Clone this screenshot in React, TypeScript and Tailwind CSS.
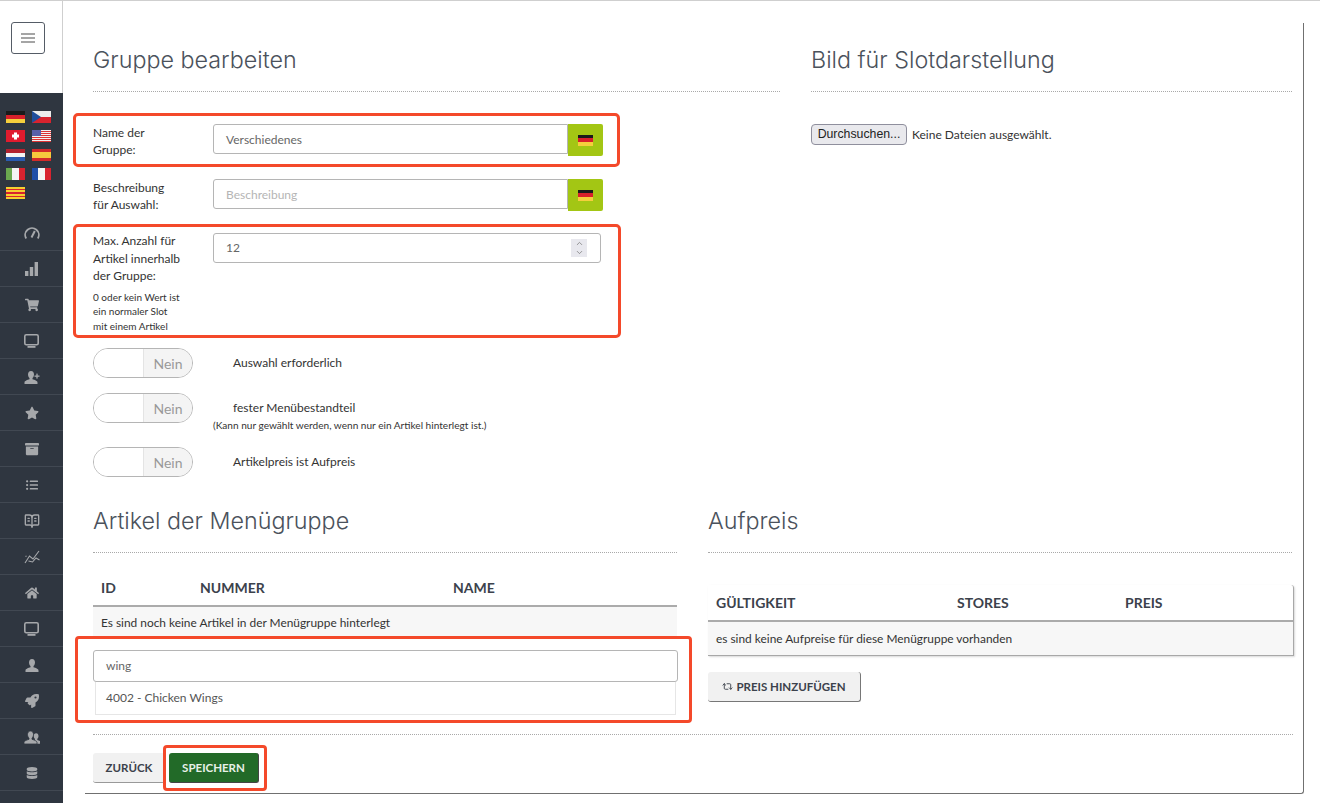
import React from 'react';
import { FaArchive, FaDatabase, FaHome, FaListUl, FaRocket, FaShoppingCart, FaStar } from 'react-icons/fa';
import { LuBookOpenText, LuChevronDown, LuChevronUp, LuRepeat2 } from 'react-icons/lu';

const lato = { fontFamily: 'Lato, "Noto Sans", sans-serif' };

const bust = 'M7 1C5 1 4 2.6 4 4.5c0 1.5.8 3 1.5 3.5v1.3C3.5 10 .5 10.8.5 12.5V14h13v-1.5c0-1.7-3-2.5-5-3.2V8c.7-.5 1.5-2 1.5-3.5C10 2.6 9 1 7 1z';

function Gauge() {
  return (
    <svg width="16" height="13" viewBox="0 0 16 13" fill="none" stroke="currentColor" strokeWidth="1.8">
      <path d="M2.2 12.5 A6.8 6.8 0 1 1 13.8 12.5" />
      <path d="M7.5 11.5 L10.8 5" strokeWidth="2" />
    </svg>
  );
}

function Bars() {
  return (
    <svg width="13" height="14" viewBox="0 0 13 14" fill="currentColor">
      <rect x="0" y="9" width="3.4" height="5" />
      <rect x="4.8" y="5" width="3.4" height="9" />
      <rect x="9.6" y="0" width="3.4" height="14" />
    </svg>
  );
}

function Monitor() {
  return (
    <svg width="15" height="14" viewBox="0 0 15 14" fill="none">
      <rect x="0.8" y="0.8" width="13.4" height="10" rx="1.5" stroke="currentColor" strokeWidth="1.6" />
      <rect x="3.5" y="12" width="8" height="1.8" fill="currentColor" />
    </svg>
  );
}

function UserPlus() {
  return (
    <svg width="16" height="14" viewBox="0 0 16 14" fill="currentColor">
      <path d={bust} />
      <rect x="10.5" y="5.5" width="5" height="1.3" />
      <rect x="12.35" y="3.6" width="1.3" height="5" />
    </svg>
  );
}

function UserBust() {
  return (
    <svg width="14" height="14" viewBox="0 0 14 14" fill="currentColor">
      <path d={bust} />
    </svg>
  );
}

function TwoUsers() {
  return (
    <svg width="16" height="14" viewBox="0 0 16 14" fill="currentColor">
      <g transform="translate(6.5 2.5) scale(0.8)"><path d={bust} /></g>
      <path d={bust} transform="translate(-0.5 0)" stroke="#2f3640" strokeWidth="0.8" />
    </svg>
  );
}

function Trend() {
  return (
    <svg width="16" height="14" viewBox="0 0 16 14" fill="none" stroke="currentColor" strokeWidth="1.1">
      <path d="M1 13 L5.5 6 L9 9 L15 1" />
      <path d="M1.5 6.5 L2.5 6 M4.5 11 L8.5 12 L12 8 L15.5 10" />
    </svg>
  );
}

const menu = [
  <Gauge />,
  <Bars />,
  <FaShoppingCart size={14} />,
  <Monitor />,
  <UserPlus />,
  <FaStar size={14} />,
  <FaArchive size={14} />,
  <FaListUl size={12} />,
  <LuBookOpenText size={16} />,
  <Trend />,
  <FaHome size={14} />,
  <Monitor />,
  <UserBust />,
  <FaRocket size={14} />,
  <TwoUsers />,
  <FaDatabase size={12} />,
];

function Stripes({ colors, vertical }: { colors: string[]; vertical?: boolean }) {
  return (
    <div className={vertical ? 'flex h-full w-full' : 'flex flex-col h-full w-full'}>
      {colors.map((c, i) => (
        <div key={i} className="flex-1" style={{ background: c }} />
      ))}
    </div>
  );
}

function Flag({ children }: { children: React.ReactNode }) {
  return <div className="w-[19px] h-[12px] overflow-hidden">{children}</div>;
}

function Flags() {
  return (
    <div className="grid grid-cols-[19px_19px] gap-x-[7px] gap-y-[7px] pl-[6px] pt-[18px]">
      <Flag><Stripes colors={['#1a1a1a', '#d8202a', '#f5cf3c']} /></Flag>
      <Flag>
        <svg width="19" height="12" viewBox="0 0 19 12">
          <rect width="19" height="6" fill="#ececec" />
          <rect y="6" width="19" height="6" fill="#d7232e" />
          <path d="M0 0 L9 6 L0 12 Z" fill="#1f4e9c" />
        </svg>
      </Flag>
      <Flag>
        <svg width="19" height="12" viewBox="0 0 19 12">
          <rect width="19" height="12" fill="#e01b2e" />
          <rect x="8" y="2.5" width="3" height="7" fill="#fff" />
          <rect x="6" y="4.5" width="7" height="3" fill="#fff" />
        </svg>
      </Flag>
      <Flag>
        <svg width="19" height="12" viewBox="0 0 19 12">
          <rect width="19" height="12" fill="#f2f2f2" />
          <rect y="1" width="19" height="1" fill="#d33" />
          <rect y="3" width="19" height="1" fill="#d33" />
          <rect y="5" width="19" height="1" fill="#d33" />
          <rect y="7" width="19" height="1" fill="#d33" />
          <rect y="9" width="19" height="1" fill="#d33" />
          <rect y="11" width="19" height="1" fill="#d33" />
          <rect width="9" height="6" fill="#5a5fa8" />
        </svg>
      </Flag>
      <Flag><Stripes colors={['#b3222f', '#f4f4f4', '#2a5bb0']} /></Flag>
      <Flag>
        <div className="flex flex-col h-full">
          <div className="h-[3px] bg-[#d22a2a]" />
          <div className="h-[6px] bg-[#f6c93d]" />
          <div className="h-[3px] bg-[#d22a2a]" />
        </div>
      </Flag>
      <Flag><Stripes vertical colors={['#6aa84f', '#f4f4f4', '#d8232f']} /></Flag>
      <Flag><Stripes vertical colors={['#1f4ea8', '#f4f4f4', '#d8232f']} /></Flag>
      <Flag><Stripes colors={['#f6cf2f', '#d8232f', '#f6cf2f', '#d8232f', '#f6cf2f', '#d8232f', '#f6cf2f']} /></Flag>
    </div>
  );
}

function Sidebar() {
  return (
    <aside className="w-[63px] shrink-0 flex flex-col">
      <div className="h-[92px] shrink-0 border-r border-[#cfcfcf] pl-[11px] pt-[21px]">
        <button className="w-[34px] h-[32px] border border-[#555c66] rounded-[3px] flex flex-col items-center justify-center gap-[2px]">
          <span className="w-[14px] h-[2px] bg-[#a5a5a5]" />
          <span className="w-[14px] h-[2px] bg-[#a5a5a5]" />
          <span className="w-[14px] h-[2px] bg-[#a5a5a5]" />
        </button>
      </div>
      <div className="flex-1 bg-[#2f3640] overflow-hidden">
        <Flags />
        <div className="mt-[16px]">
          {menu.map((icon, i) => (
            <div key={i} className="h-[36px] flex items-center justify-center border-b border-[#414852] text-[#a6a8ab]">
              {icon}
            </div>
          ))}
        </div>
      </div>
    </aside>
  );
}

function Heading({ children }: { children: React.ReactNode }) {
  return (
    <h2 className="h-[49px] pt-[1px] border-b border-dotted border-[#a9a9a9] text-[23.3px] leading-[32px] font-light text-[#4b525c]" style={{ fontFamily: 'Inter, Roboto, sans-serif' }}>
      {children}
    </h2>
  );
}

function LangField({ value, placeholder }: { value?: string; placeholder?: string }) {
  return (
    <div className="flex items-start w-[390px]">
      <div className={`w-[355px] h-[30px] border border-[#b5b5b5] rounded-l-[3px] pl-[12px] pt-[1px] flex items-center text-[12px] ${value ? 'text-[#666]' : 'text-[#b5b5b5]'}`}>
        {value || placeholder}
      </div>
      <div className="w-[35px] h-[32px] bg-[#a3c614] flex items-center justify-center rounded-r-[2px]">
        <div className="w-[15px] h-[11px]">
          <Stripes colors={['#1a1a1a', '#d8202a', '#f5cf3c']} />
        </div>
      </div>
    </div>
  );
}

function Toggle() {
  return (
    <div className="w-[100px] h-[30px] border border-[#b5b5b5] rounded-full overflow-hidden flex shrink-0">
      <div className="w-[49px] bg-white" />
      <div className="flex-1 bg-[#f4f4f4] border-l border-[#e4e4e4] flex items-center justify-center text-[14px] text-[#999]">Nein</div>
    </div>
  );
}

function AppButton({ children, className }: { children: React.ReactNode; className: string }) {
  return (
    <button className={`h-[30px] rounded-[3px] text-[11.5px] font-bold uppercase flex items-center justify-center ${className}`}>
      {children}
    </button>
  );
}

function ArticleGroup() {
  return (
    <div className="w-[584px]">
      <Heading>Artikel der Menügruppe</Heading>
      <table className="w-full table-fixed mt-[17px] text-[#3c424c]">
        <thead>
          <tr className="h-[36px] border-b-2 border-[#ababab] text-[14px] text-left uppercase">
            <th className="w-[107px] pl-[8px] font-bold">ID</th>
            <th className="w-[253px] font-bold">Nummer</th>
            <th className="font-bold">Name</th>
          </tr>
        </thead>
        <tbody>
          <tr className="h-[32px] bg-[#f7f7f7]">
            <td colSpan={3} className="pl-[8px] pt-[1px] text-[11.9px] text-[#333]">Es sind noch keine Artikel in der Menügruppe hinterlegt</td>
          </tr>
        </tbody>
      </table>
      <div className="-ml-[18px] -mr-[15px] h-[87px] -mt-[2px] border-[3px] border-[#f4492a] rounded-[4px] pl-[15px] pr-[11px] pt-[11px]">
        <div className="h-[32px] border border-[#b5b5b5] rounded-[3px] pl-[12px] flex items-center text-[12px] text-[#666]">wing</div>
        <div className="mx-[2px] h-[33px] border border-t-0 border-[#e6e6e6] pl-[10px] flex items-center text-[12px] text-[#555]">4002 - Chicken Wings</div>
      </div>
    </div>
  );
}

function SurchargeGroup() {
  return (
    <div className="w-[586px] ml-[31px]">
      <div className="w-[584px]">
        <Heading>Aufpreis</Heading>
      </div>
      <div className="mt-[32px] rounded-tr-[3px] border-r border-b border-[#a8a8a8] shadow-[1px_1px_2px_rgba(0,0,0,0.15)]">
        <table className="w-full table-fixed text-[#3c424c]">
          <thead>
            <tr className="h-[36px] border-b-2 border-[#ababab] text-[14px] text-left uppercase">
              <th className="w-[249px] pl-[8px] font-bold">Gültigkeit</th>
              <th className="w-[168px] font-bold">Stores</th>
              <th className="font-bold">Preis</th>
            </tr>
          </thead>
          <tbody>
            <tr className="h-[34px] bg-[#f7f7f7]">
              <td colSpan={3} className="pl-[8px] text-[11.9px] text-[#333]">es sind keine Aufpreise für diese Menügruppe vorhanden</td>
            </tr>
          </tbody>
        </table>
      </div>
      <AppButton className="mt-[16px] w-[153px] bg-[#f1f1f1] border-r border-b border-[#777] text-[#3c424c] gap-[3px]">
        <LuRepeat2 size={11} />
        Preis hinzufügen
      </AppButton>
    </div>
  );
}

export default function App() {
  return (
    <div className="flex h-[803px] w-[1320px] overflow-hidden bg-white border-t border-[#cfcfcf] text-[#333]" style={lato}>
      <Sidebar />
      <main className="flex-1 pl-[22px] pt-[22px] overflow-hidden">
        <div className="w-[1219px] h-[771px] border-r border-b border-[#707070] rounded-br-[3px] pl-[8px] pt-[20px]">
          <div className="flex">
            <div className="w-[687px]">
              <Heading>Gruppe bearbeiten</Heading>
              <div className="mt-[21px] -ml-[20px] w-[547px] h-[54px] border-[3px] border-[#f4492a] rounded-[5px] pl-[17px] pt-[8px] flex">
                <label className="w-[120px] text-[12px] leading-[17px]">Name der<br />Gruppe:</label>
                <LangField value="Verschiedenes" />
              </div>
              <div className="mt-[12px] flex">
                <label className="w-[120px] text-[12px] leading-[17px]">Beschreibung<br />für Auswahl:</label>
                <LangField placeholder="Beschreibung" />
              </div>
              <div className="mt-[11px] -ml-[20px] w-[548px] h-[114px] border-[3px] border-[#f4492a] rounded-[5px] pl-[17px] pt-[6px] flex">
                <div className="w-[120px] -mt-[1px]">
                  <p className="text-[12px] leading-[17.5px]">Max. Anzahl für<br />Artikel innerhalb<br />der Gruppe:</p>
                  <p className="text-[10px] leading-[14.5px] mt-[5px]">0 oder kein Wert ist<br />ein normaler Slot<br />mit einem Artikel</p>
                </div>
                <div className="w-[388px] h-[30px] border border-[#b5b5b5] rounded-[3px] pl-[12px] pr-[13px] flex items-center justify-between text-[12px] text-[#666]">
                  12
                  <span className="w-[16px] h-[18px] bg-[#e8e8ee] flex flex-col items-center justify-center text-[#777]">
                    <LuChevronUp size={9} />
                    <LuChevronDown size={9} />
                  </span>
                </div>
              </div>
              <div className="mt-[10px] flex items-center">
                <Toggle />
                <span className="ml-[40px] text-[12px]">Auswahl erforderlich</span>
              </div>
              <div className="mt-[15px] flex items-center">
                <Toggle />
                <span className="ml-[40px] text-[12px]">fester Menübestandteil</span>
              </div>
              <p className="ml-[120px] text-[10.1px] leading-[12px] -mt-[4px]">(Kann nur gewählt werden, wenn nur ein Artikel hinterlegt ist.)</p>
              <div className="mt-[16px] flex items-center">
                <Toggle />
                <span className="ml-[40px] text-[12px]">Artikelpreis ist Aufpreis</span>
              </div>
            </div>
            <div className="w-[481px] ml-[31px]">
              <Heading>Bild für Slotdarstellung</Heading>
              <div className="mt-[32px] flex items-center gap-[5px]">
                <button className="w-[96px] h-[21px] bg-[#e9e9ed] border border-[#8f8f9d] rounded-[4px] text-[12.3px] text-[#222]" style={{ fontFamily: '"Liberation Sans", sans-serif' }}>Durchsuchen...</button>
                <span className="text-[12px]">Keine Dateien ausgewählt.</span>
              </div>
            </div>
          </div>
          <div className="flex mt-[27px]">
            <ArticleGroup />
            <SurchargeGroup />
          </div>
          <div className="mt-[11px] w-[1200px] border-t border-dotted border-[#a9a9a9]" />
          <div className="mt-[10px] flex items-center">
            <AppButton className="w-[72px] bg-[#f1f1f1] border-b border-[#999] text-[#3c424c]">Zurück</AppButton>
            <div className="-ml-[2px] w-[104px] h-[46px] border-[3px] border-[#f4492a] rounded-[4px] pl-[3px] flex items-center">
              <AppButton className="w-[90px] bg-[#226a28] border-b border-r border-[#444] text-[#e8f1e8]">Speichern</AppButton>
            </div>
          </div>
        </div>
      </main>
    </div>
  );
}
